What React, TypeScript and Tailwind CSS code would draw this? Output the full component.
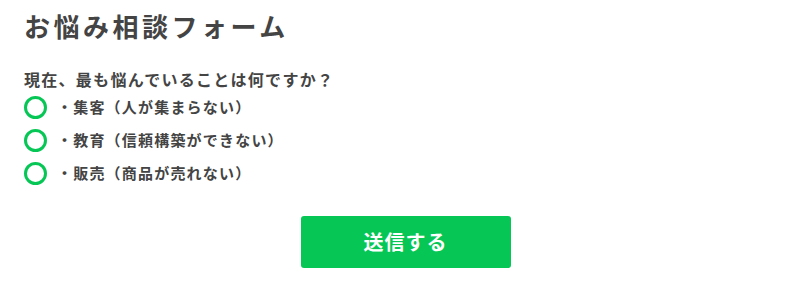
import { useState } from "react";

const options = [
  "・集客（人が集まらない）",
  "・教育（信頼構築ができない）",
  "・販売（商品が売れない）",
];

export default function App() {
  const [selected, setSelected] = useState<number | null>(null);

  return (
    <div
      className="min-h-[293px] w-[800px] bg-white pl-6 pr-[13px] text-[#444]"
      style={{ fontFamily: '"Noto Sans CJK JP", "Noto Sans", sans-serif' }}
    >
      <h1 className="text-[26px] font-bold leading-[52px] tracking-[0.135em]">
        お悩み相談フォーム
      </h1>

      <p className="mt-[15px] text-[16px] font-bold leading-[24px] tracking-[0.08em]">
        現在、最も悩んでいることは何ですか？
      </p>

      <div className="flex flex-col">
        {options.map((label, i) => (
          <label
            key={label}
            className="flex h-[33px] cursor-pointer items-center gap-[10px]"
            onClick={() => setSelected(i)}
          >
            <span className="flex h-[23px] w-[23px] shrink-0 items-center justify-center rounded-full border-[3px] border-[#06c755]">
              {selected === i && <span className="h-[9px] w-[9px] rounded-full bg-[#06c755]" />}
            </span>
            <span className="text-[15px] font-bold tracking-[0.08em]">{label}</span>
          </label>
        ))}
      </div>

      <div className="mt-[26px] flex justify-center">
        <button className="flex h-[52px] w-[210px] items-center justify-center rounded-[3px] bg-[#06c755] text-[20px] font-bold tracking-[0.05em] text-white">
          送信する
        </button>
      </div>
    </div>
  );
}
